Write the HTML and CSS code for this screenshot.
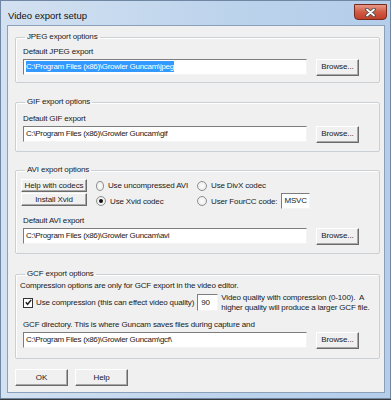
FILE: index.html
```html
<!DOCTYPE html>
<html lang="en">

<head>
    <meta charset="UTF-8">
    <title>Video export setup</title>
    <link rel="stylesheet" href="styles.css">
</head>

<body>

    <div class="window">
        <div class="titlebar">
            <span class="title">Video export setup</span>
            <span class="close">
                <svg width="13" height="9" viewBox="0 0 13 9">
                    <path d="M3 1.5 L10 7.5 M10 1.5 L3 7.5" stroke="#4a4a4a" stroke-width="3.6" stroke-linecap="round"/>
                    <path d="M3 1.5 L10 7.5 M10 1.5 L3 7.5" stroke="#fff" stroke-width="1.8" stroke-linecap="round"/>
                </svg>
            </span>
        </div>

        <div class="client">
            <!-- JPEG -->
            <fieldset class="group group-jpeg">
                <legend>JPEG export options</legend>
                <div class="label">Default JPEG export</div>
                <div class="path-row">
                    <div class="field path"><span class="sel">C:\Program Files (x86)\Growler Guncam\jpeg</span></div>
                    <button class="btn browse">Browse...</button>
                </div>
            </fieldset>

            <!-- GIF -->
            <fieldset class="group group-gif">
                <legend>GIF export options</legend>
                <div class="label">Default GIF export</div>
                <div class="path-row">
                    <div class="field path">C:\Program Files (x86)\Growler Guncam\gif</div>
                    <button class="btn browse">Browse...</button>
                </div>
            </fieldset>

            <!-- AVI -->
            <fieldset class="group group-avi">
                <legend>AVI export options</legend>
                <div class="codec-grid">
                    <button class="btn codec-btn">Help with codecs</button>
                    <label class="radio"><span class="dot"></span>Use uncompressed AVI</label>
                    <label class="radio"><span class="dot"></span>Use DivX codec</label>

                    <button class="btn codec-btn install">Install Xvid</button>
                    <label class="radio"><span class="dot checked"></span>Use Xvid codec</label>
                    <label class="radio"><span class="dot"></span>User FourCC code:<span class="field fourcc">MSVC</span></label>
                </div>
                <div class="label">Default AVI export</div>
                <div class="path-row">
                    <div class="field path">C:\Program Files (x86)\Growler Guncam\avi</div>
                    <button class="btn browse">Browse...</button>
                </div>
            </fieldset>

            <!-- GCF -->
            <fieldset class="group group-gcf">
                <legend>GCF export options</legend>
                <div class="note">Compression options are only for GCF export in the video editor.</div>
                <div class="compress-row">
                    <label class="check"><span class="box">
                        <svg width="7" height="7" viewBox="0 0 7 7"><path d="M0.8 3.2 L2.6 5.3 L6.2 0.9" fill="none" stroke="#222" stroke-width="1.5"/></svg>
                    </span>Use compression (this can effect video quality)</label>
                    <span class="field quality">90</span>
                    <span class="quality-text">Video quality with compression (0-100).&nbsp; A<br>higher quality will produce a larger GCF file.</span>
                </div>
                <div class="label">GCF directory. This is where Guncam saves files during capture and</div>
                <div class="path-row">
                    <div class="field path">C:\Program Files (x86)\Growler Guncam\gcf\</div>
                    <button class="btn browse">Browse...</button>
                </div>
            </fieldset>

            <div class="actions">
                <button class="btn action">OK</button>
                <button class="btn action">Help</button>
            </div>
        </div>
    </div>

</body>

</html>
```

FILE: styles.css
```css
/* Ventana general */
body {
    margin: 0;
    background-color: #3a3a3a;
    font-family: "Liberation Sans", Arial, sans-serif;
    font-size: 8px;
    letter-spacing: -0.15px;
    color: #1a1a1a;
}

.window {
    width: 389px;
    height: 397px;
    border: 1px solid #6f87a3;
    background: linear-gradient(to right, #d3e1f1, #bcd3ec 60%, #b4cde9);
    display: flex;
    flex-direction: column;
}

.titlebar {
    height: 24px;
    display: flex;
    justify-content: space-between;
    align-items: flex-start;
}

.title {
    font-size: 9.5px;
    letter-spacing: 0;
    color: #111;
    margin: 9px 0 0 7px;
}

.close {
    width: 31px;
    height: 14px;
    margin: 3px 3px 0 0;
    border: 1px solid #7a2a1c;
    border-radius: 0 0 4px 4px;
    background: linear-gradient(#e59a88, #d05a44 50%, #c0402a);
    display: flex;
    align-items: center;
    justify-content: center;
}

.client {
    margin: 0 5px 0 6px;
    height: 368px;
    border: 1px solid #8ba0ba;
    background-color: #f0f0f0;
    padding: 5px 4px 0 7px;
    box-sizing: border-box;
}

/* Grupos */
.group {
    margin: 0;
    min-width: 0;
    padding: 3px 20px 6px 7px;
    border: 1px solid #cbd0d5;
    border-radius: 2px;
    box-shadow: inset 1px 1px 0 #fff;
}

.group legend {
    margin-left: 2px;
    padding: 0 2px;
    line-height: 12px;
}

.group-gif {
    margin-top: 13px;
    padding-top: 5px;
    padding-bottom: 8px;
}

.group-avi {
    margin-top: 12px;
    padding-bottom: 8px;
}

.group-gcf {
    margin-top: 14px;
    padding-top: 0;
    padding-bottom: 9px;
}

.label {
    line-height: 12px;
}

.path-row {
    display: flex;
    align-items: center;
    gap: 9px;
    height: 18px;
}

.field {
    display: block;
    height: 16px;
    line-height: 14px;
    box-sizing: border-box;
    background-color: #fff;
    border: 1px solid;
    border-color: #7d7d7d #f4f4f4 #f4f4f4 #7d7d7d;
    padding: 0 2px;
    white-space: nowrap;
    overflow: hidden;
}

.path {
    width: 284px;
    letter-spacing: -0.3px;
}

.sel {
    background-color: #3399ff;
    color: #fff;
    padding: 1px 0;
}

.btn {
    font-family: inherit;
    font-size: 8px;
    letter-spacing: -0.1px;
    color: #1a1a1a;
    background-color: #f0f0f0;
    border: 1px solid;
    border-color: #fff #6a6a6a #6a6a6a #fff;
    box-shadow: inset -1px -1px 0 #a8a8a8;
    padding: 0;
    line-height: 10px;
}

.browse {
    width: 43px;
    height: 17px;
}

/* AVI */
.codec-grid {
    display: grid;
    grid-template-columns: 66px 92px auto;
    grid-template-rows: 13px 16px;
    column-gap: 9px;
    row-gap: 1px;
    align-items: center;
    margin: 0 0 6px -2px;
}

.codec-btn {
    height: 13px;
    width: 66px;
}

.install {
    align-self: start;
}

.radio {
    display: flex;
    align-items: center;
    gap: 3px;
    white-space: nowrap;
}

.dot {
    width: 10px;
    height: 10px;
    box-sizing: border-box;
    border: 1px solid #8e8f8f;
    border-radius: 50%;
    background: radial-gradient(#fff, #e4e4e4);
    display: inline-flex;
    align-items: center;
    justify-content: center;
    margin-right: 1px;
}

.dot.checked::after {
    content: '';
    width: 4px;
    height: 4px;
    border-radius: 50%;
    background-color: #111;
}

.fourcc {
    display: inline-block;
    width: 29px;
    height: 16px;
    line-height: 14px;
    margin-left: 1px;
}

/* GCF */
.note {
    line-height: 12px;
    margin: 0 0 2px -3px;
}

.compress-row {
    display: flex;
    align-items: center;
    height: 17px;
    margin: 0 -20px 8px 0;
}

.compress-row > * {
    flex-shrink: 0;
}

.check {
    display: flex;
    align-items: center;
    gap: 3px;
    white-space: nowrap;
}

.box {
    width: 10px;
    height: 10px;
    box-sizing: border-box;
    border: 1px solid #333;
    background-color: #fff;
    display: inline-flex;
    align-items: center;
    justify-content: center;
}

.quality {
    width: 21px;
    height: 17px;
    line-height: 15px;
    margin-left: 3px;
    padding-left: 3px;
}

.quality-text {
    margin-left: 3px;
    line-height: 10px;
    white-space: nowrap;
}

.actions {
    display: flex;
    gap: 7px;
    margin-top: 10px;
}

.action {
    width: 53px;
    height: 17px;
}
```
